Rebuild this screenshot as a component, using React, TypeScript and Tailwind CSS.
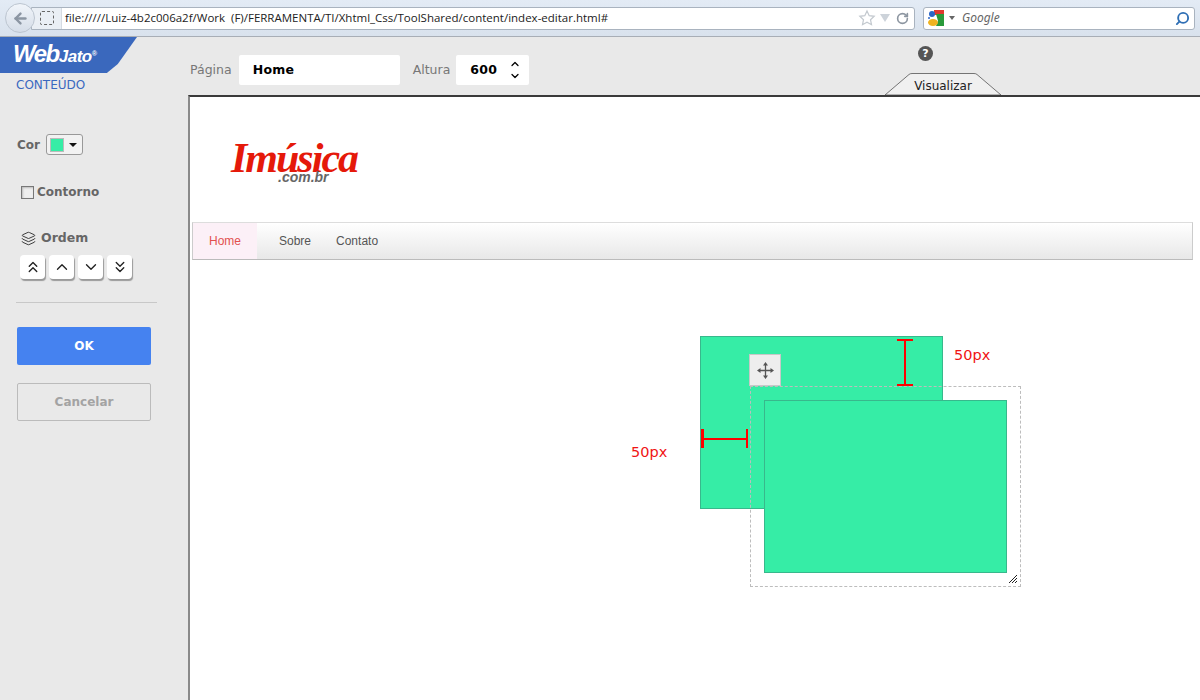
import React from 'react';
import { ChevronUp, ChevronDown, ChevronsUp, ChevronsDown, Layers, RotateCw, ArrowLeft, Search } from 'lucide-react';

const orderIcons = [
  { icon: ChevronsUp, w: 'w-[25px]' },
  { icon: ChevronUp, w: 'w-[25px]' },
  { icon: ChevronDown, w: 'w-[25px]' },
  { icon: ChevronsDown, w: 'w-[25px]' },
];

const BrowserBar: React.FC = () => (
  <div className="h-[37px] shrink-0 flex items-center bg-gradient-to-b from-[#e3ebf5] to-[#d9e2ed] border-b border-[#a8aeb6] font-['Noto_Sans',sans-serif]">
    <div className="relative z-10 ml-[5px] w-[30px] h-[30px] rounded-full bg-gradient-to-b from-[#f1f5fa] to-[#d5dde8] border border-[#bcc5d0] flex items-center justify-center">
      <ArrowLeft size={17} strokeWidth={3.4} className="text-[#8c96a3]" />
    </div>
    <div className="-ml-[4px] w-[884px] h-[23px] bg-white border border-[#a9b3bf] rounded-r-[3px] flex items-center">
      <div className="w-[30px] h-full shrink-0 bg-[#eaeff5] flex items-center justify-center border-r border-[#d5dbe2]">
        <div className="w-[14px] h-[14px] border border-dashed border-[#666] rounded-[2px]" />
      </div>
      <span className="ml-[3px] text-[11.5px] text-[#222] whitespace-pre font-['Open_Sans',sans-serif] flex-1">file://///Luiz-4b2c006a2f/Work  (F)/FERRAMENTA/TI/Xhtml_Css/ToolShared/content/index-editar.html#</span>
      <svg width="18" height="18" viewBox="0 0 18 18" className="mr-[3px]">
        <path d="M9 2l2.2 4.7 5 .6-3.7 3.4 1 5L9 13.3 4.500 15.700l1-5L1.800 7.300l5-.6z" fill="#fff" stroke="#c3c9cf" strokeWidth="1.200" />
      </svg>
      <svg width="12" height="10" viewBox="0 0 12 10" className="mr-[5px]">
        <path d="M1 1h10L6 9z" fill="#cdd3da" />
      </svg>
      <RotateCw size={13} strokeWidth={3} className="mr-[5px] text-[#8d96a1]" />
    </div>
    <div className="ml-[8px] w-[272px] h-[23px] bg-white border border-[#a9b3bf] rounded-[3px] flex items-center">
      <svg width="18" height="18" viewBox="0 0 18 18" className="ml-[3px]">
        <rect x="7" y="1" width="5" height="5" fill="#e03a2e" />
        <rect x="12" y="1" width="5" height="5" fill="#e03a2e" />
        <path d="M9 5h8v12H9l2-5z" fill="#2a9a3b" />
        <circle cx="5" cy="5" r="3" fill="#2a66c8" />
        <circle cx="2" cy="9" r="1" fill="#2a66c8" />
        <ellipse cx="6" cy="13.500" rx="5" ry="3.500" fill="#efb320" />
      </svg>
      <svg width="6" height="4" viewBox="0 0 6 4" className="ml-[4px]">
        <path d="M0 0h6L3 4z" fill="#666" />
      </svg>
      <span className="ml-[7px] flex-1 text-[12px] italic text-[#666]">Google</span>
      <Search size={15} strokeWidth={3} className="mr-[4px] -scale-x-100 text-[#2f6fb5]" />
    </div>
  </div>
);

const Sidebar: React.FC = () => (
  <aside className="w-[188px] shrink-0 bg-[#e9e9e9] font-['DejaVu_Sans',sans-serif]">
    <div className="w-[137px] h-[36px] bg-[#3a68bd] [clip-path:polygon(0_0,100%_0,86%_75%,78%_100%,0_100%)] pl-[13px] text-white font-['Liberation_Sans',sans-serif] italic font-bold leading-[34px]">
      <span className="text-[24px] tracking-[-1.500px]">Web</span>
      <span className="text-[17px] tracking-[-0.500px]">Jato</span>
      <span className="text-[7px] align-super">®</span>
    </div>
    <div className="pl-[16px] pt-[4px] text-[12px] leading-[16px] text-[#3a68c0]">CONTEÚDO</div>

    <div className="mt-[41px] ml-[17px] flex items-center h-[21px]">
      <span className="text-[12px] font-bold text-[#666]">Cor</span>
      <button className="ml-[6px] w-[37px] h-[21px] bg-[#f2f2f2] border border-[#999] rounded-[3px] flex items-center pl-[3px]">
        <span className="w-[14px] h-[14px] bg-[#36eda6] border border-[#bbb]" />
        <svg width="8" height="4" viewBox="0 0 8 4" className="ml-[5px]">
          <path d="M0 0h8L4 4z" fill="#111" />
        </svg>
      </button>
    </div>

    <div className="mt-[30px] ml-[21px] flex items-center h-[14px]">
      <span className="w-[13px] h-[13px] bg-[#eee] border border-[#777] shadow-[inset_1px_1px_2px_#bbb]" />
      <span className="ml-[3px] text-[12px] font-bold text-[#666]">Contorno</span>
    </div>

    <div className="mt-[31px] ml-[21px] flex items-center h-[16px]">
      <Layers size={15} strokeWidth={1.500} className="text-[#333]" />
      <span className="ml-[5px] text-[12.500px] font-bold text-[#666]">Ordem</span>
    </div>

    <div className="mt-[9px] ml-[20px] flex gap-[4px]">
      {orderIcons.map((item, index) => {
        const Icon = item.icon;
        return (
          <button key={index} className={`${item.w} h-[24px] bg-white rounded-[4px] shadow-[1px_2px_1px_#999] flex items-center justify-center`}>
            <Icon size={18} strokeWidth={1.800} className="text-[#222]" />
          </button>
        );
      })}
    </div>

    <div className="mt-[23px] ml-[16px] w-[141px] h-px bg-[#c8c8c8]" />

    <button className="block mt-[24px] ml-[17px] w-[134px] h-[38px] bg-[#4582f0] rounded-[2px] text-[12px] font-bold text-white">OK</button>
    <button className="block mt-[18px] ml-[17px] w-[134px] h-[38px] border border-[#bbb] rounded-[2px] text-[12px] font-bold text-[#a3a3a3]">Cancelar</button>
  </aside>
);

const TopBar: React.FC = () => (
  <div className="relative h-[58px] shrink-0 flex items-start pt-[18px] pl-[2px] font-['DejaVu_Sans',sans-serif]">
    <span className="text-[12.500px] leading-[30px] text-[#777]">Página</span>
    <div className="ml-[7px] w-[161px] h-[30px] bg-white rounded-[2px] pl-[14px] text-[12.500px] font-bold leading-[30px] text-black tracking-[0.300px]">Home</div>
    <span className="ml-[13px] text-[12.500px] leading-[30px] text-[#777]">Altura</span>
    <div className="ml-[6px] w-[73px] h-[30px] bg-white rounded-[2px] pl-[14px] flex items-center">
      <span className="text-[12.500px] font-bold text-black tracking-[0.300px]">600</span>
      <span className="ml-[12px] flex flex-col text-black">
        <ChevronUp size={12} strokeWidth={2.500} />
        <ChevronDown size={12} strokeWidth={2.500} />
      </span>
    </div>
    <div className="absolute left-[730px] top-[9px] w-[15px] h-[15px] rounded-full bg-[#555] text-white text-[11px] font-bold leading-[15px] text-center">?</div>
    <div className="absolute left-[697px] top-[36px]">
      <svg width="116" height="22" viewBox="0 0 116 22" className="block">
        <path d="M0 22L24 1.500Q25 .5 27 .5H89Q91 .5 92 1.500L116 22z" fill="#f0f0f0" stroke="#555" strokeWidth="0.800" />
      </svg>
      <span className="absolute inset-0 top-[5px] text-center text-[12px] leading-[16px] text-[#222]">Visualizar</span>
    </div>
  </div>
);

const Canvas: React.FC = () => (
  <div className="relative flex-1 bg-white border-t-2 border-t-[#3a3a3a] border-l-2 border-l-[#8a8a8a] overflow-hidden">
    <div className="pt-[41px] pl-[41px] h-[125px]">
      <div className="relative w-[110px] h-[54px] select-none">
        <span className="absolute left-0 top-[-6px] text-[42px] leading-[52px] font-bold italic tracking-[-2px] text-[#e5190a] font-['Liberation_Serif',serif]">Imúsica</span>
        <span className="absolute left-[47px] top-[30px] text-[14px] leading-[18px] font-bold italic text-[#666] font-['Liberation_Sans',sans-serif]">.com.br</span>
      </div>
    </div>
    <nav className="ml-[2px] w-[1001px] h-[38px] flex items-stretch border border-t-[#ddd] border-x-[#ccc] border-b-[#bbb] bg-gradient-to-b from-white to-[#e8e8e8] text-[12px] text-[#555] font-['Liberation_Sans',sans-serif]">
      <a className="w-[64px] bg-[#fcf0f7] text-[#e2504f] flex items-center justify-center">Home</a>
      <a className="ml-[22px] flex items-center">Sobre</a>
      <a className="ml-[25px] flex items-center">Contato</a>
    </nav>

    {/* objetos soltos no canvas */}
    <div className="absolute left-[510px] top-[239px] w-[243px] h-[173px] bg-[#36eda6] border border-[#38b88c]" />
    <div className="absolute left-[574px] top-[303px] w-[243px] h-[173px] bg-[#36eda6] border border-[#38b88c]" />
    <div className="absolute left-[560px] top-[289px] w-[271px] h-[201px] border border-dashed border-[#bdbdbd]">
      <svg width="8" height="8" viewBox="0 0 8 8" className="absolute right-[3px] bottom-[3px]">
        <path d="M0 8L8 0M3 8L8 3M6 8L8 6" stroke="#222" strokeWidth="1" />
      </svg>
    </div>
    <div className="absolute left-[559px] top-[257px] w-[32px] h-[32px] bg-[#eeeeee] border border-[#c8c8c8] flex items-center justify-center">
      <svg width="17" height="17" viewBox="0 0 17 17">
        <path d="M8.500 2v13M2 8.500h13" stroke="#555" strokeWidth="1.300" />
        <path d="M8.500 0l2.500 3.500H6zM8.500 17l2.500-3.500H6zM0 8.500l3.500-2.500v5zM17 8.500l-3.500-2.500v5z" fill="#555" />
      </svg>
    </div>
    <div className="absolute left-[707px] top-[242px] w-[16px] h-[47px] border-y-2 border-[#ff0000] flex justify-center">
      <div className="w-[2px] bg-[#ff0000]" />
    </div>
    <span className="absolute left-[764px] top-[249px] text-[14.500px] leading-[18px] text-[#f01414] font-['DejaVu_Sans',sans-serif]">50px</span>
    <div className="absolute left-[511px] top-[332px] w-[47px] h-[19px] border-l-[3px] border-r-2 border-[#ff0000] flex items-center">
      <div className="w-full h-[2px] bg-[#ff0000]" />
    </div>
    <span className="absolute left-[441px] top-[346px] text-[14.500px] leading-[18px] text-[#f01414] font-['DejaVu_Sans',sans-serif]">50px</span>
  </div>
);

const App: React.FC = () => {
  return (
    <div className="w-[1200px] h-[700px] flex flex-col overflow-hidden bg-[#e9e9e9]">
      <BrowserBar />
      <div className="flex-1 flex min-h-0">
        <Sidebar />
        <main className="flex-1 flex flex-col min-w-0">
          <TopBar />
          <Canvas />
        </main>
      </div>
    </div>
  );
};

export default App;
